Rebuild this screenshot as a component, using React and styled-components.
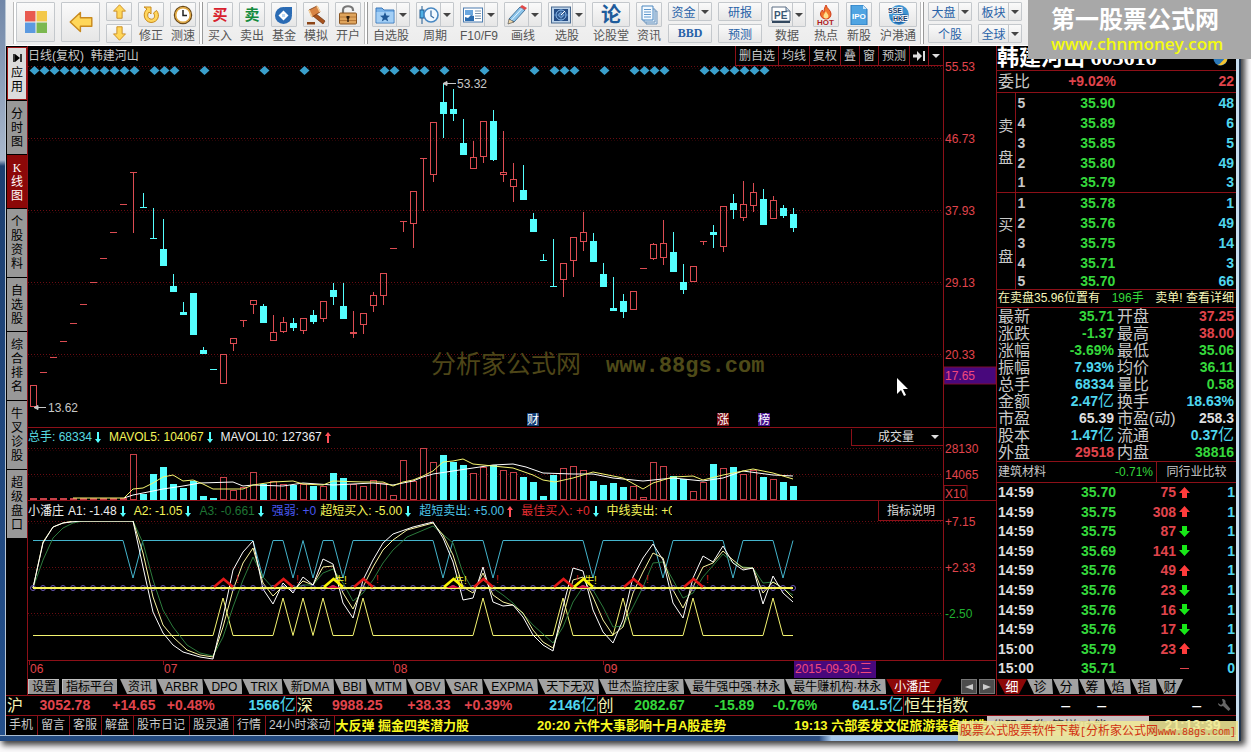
import React, { useState } from 'react';
import styled, { createGlobalStyle, css } from 'styled-components';

const SANS = `"Liberation Sans", "Noto Sans CJK SC", sans-serif`;
const RED = '#e0444c';
const LINE = '#8c1018';
const CYAN = '#54ffff';
const GREEN = '#35d83c';
const AQUA = '#4fd6ee';
const GREY = '#c8c8c8';

const GlobalStyle = createGlobalStyle`
  * { box-sizing: border-box; }
  body { margin: 0; background: #fbfafb; font-family: ${SANS}; font-size: 12px; }
  button, input, select { font: inherit; margin: 0; padding: 0; border: 0; background: none; color: inherit; }
  a { color: inherit; text-decoration: none; }
  table { border-collapse: collapse; border-spacing: 0; }
  td, th { padding: 0; font-weight: normal; }
  svg { display: block; }
`;

const Page = styled.div`
  position: relative;
  padding: 0 10px 11px 0;
  overflow: hidden;
`;

const Frame = styled.div`
  position: relative;
  padding: 0 5px 6px 6px;
  background:
    linear-gradient(to right, #c9dff0 3px, #23364c 3px) right / 5px 100% no-repeat,
    linear-gradient(#a9bdd2 1px, transparent 1px) bottom / 100% 6px no-repeat,
    linear-gradient(to right, #234a80 60%, #2b4c80 66%, #a7c8ec 67%, #8fb5e4 90%, #30507c) bottom / 100% 6px no-repeat,
    linear-gradient(to right, transparent 5px, #b8c6d4 5px) left / 6px 100% no-repeat,
    linear-gradient(#7187a8, #a9b8cc 160px, #1c3f70 166px, #24508c);
  box-shadow: 3px 3px 6px 1px rgba(0, 0, 0, 0.75);
`;

/* ---------- toolbar ---------- */

const Toolbar = styled.header`
  display: flex;
  height: 46px;
  padding: 2px 0 0 4px;
  overflow: hidden;
  background: linear-gradient(#f5f5f5, #ececec);
  border-bottom: 1px solid #fff;
`;

const Group = styled.div`
  display: flex;
  flex: none;
  gap: ${(p) => p.$gap || 6}px;
`;

const Divider = styled.i`
  flex: none;
  width: ${(p) => p.$width || 11}px;
  height: 42px;
  background: linear-gradient(to right, #bbb 1px, #fff 1px, #fff 3px, #999 3px, #999 4px, transparent 4px) 3px 0 no-repeat;
`;

const face = css`
  border: 1px solid #c4c8cc;
  border-radius: 1px;
  background: linear-gradient(#fafafa, #e6e6e6);
`;

const Tool = styled.button`
  display: flex;
  flex-direction: column;
  align-items: center;
  width: ${(p) => (p.$wide ? 38 : 26)}px;
  color: #555;
  white-space: nowrap;
  line-height: 18px;
`;

const ToolFace = styled.span`
  ${face}
  display: flex;
  align-items: center;
  justify-content: center;
  width: 100%;
  height: 26px;
  > svg:first-child { flex: none; margin: 0 auto; }
`;

const BigTool = styled.button`
  ${face}
  display: flex;
  align-items: center;
  justify-content: center;
  width: 39px;
  height: 40px;
`;

const Stack = styled.div`
  display: flex;
  flex-direction: column;
  gap: 3px;
`;

const SmallTool = styled.button`
  ${face}
  display: flex;
  align-items: center;
  justify-content: center;
  width: ${(p) => p.$width}px;
  height: 19px;
  color: #2862a8;
  font-weight: ${(p) => (p.$strong ? 'bold' : 'normal')};
  font-family: ${(p) => (p.$strong ? '"Liberation Serif", serif' : SANS)};
  > span { flex: 1; text-align: center; }
`;

const Character = styled.b`
  color: ${(p) => p.$color};
  font-size: ${(p) => p.$size}px;
  line-height: 22px;
`;

const CaretBox = styled.i`
  display: flex;
  align-items: center;
  justify-content: center;
  align-self: stretch;
  flex: none;
  width: 13px;
  border-left: 1px solid #c4c8cc;
`;

const Caret = ({ color = '#444', size = 8 }) => (
  <svg width={size} height="4" viewBox="0 0 8 4"><path d="M0 0h8L4 4z" fill={color} /></svg>
);

const DropCaret = () => <CaretBox><Caret /></CaretBox>;

const Icon = ({ size = 20, children }) => (
  <svg width={size} height={size} viewBox="0 0 20 20">{children}</svg>
);

const ARROW = 'M1 10 9.500 2v4.500H19v7H9.500V18z';

const Arrow = ({ size, turn }) => (
  <Icon size={size}>
    <path d={ARROW} transform={`rotate(${turn} 10 10)`} fill="#ffd75a" stroke="#c98a1e" strokeWidth="1.200" strokeLinejoin="round" />
  </Icon>
);

const icons = {
  redo: (
    <Icon>
      <path d="M6 4C1 8 3 17 10 17.500 17 17.500 19.500 10 15.500 5.500l-3 2.500c2 3 1 6-2 6.200C6 14 6 9 8 7l2 2V2H3z" fill="#ffd65c" stroke="#c88a1c" />
    </Icon>
  ),
  clock: (
    <Icon>
      <circle cx="10" cy="10" r="8.500" fill="#fff" stroke="#6b4a1a" strokeWidth="1.500" />
      <circle cx="10" cy="10" r="7.300" fill="none" stroke="#e0a63a" strokeWidth="1.500" />
      <path d="M10 5v5.500h4" fill="none" stroke="#222" strokeWidth="1.500" />
    </Icon>
  ),
  fund: (
    <Icon>
      <circle cx="9.500" cy="10.500" r="8.500" fill="#2a6bb4" />
      <path d="M10 2h8v8z" fill="#2a6bb4" />
      <path d="m9.500 5.500 2.500 2.500 2.500 2.500-2.500 2.500-2.500 2.500L7 13l-2.500-2.500L7 8z" fill="#fff" />
      <path d="M8 9h3v3H8z" fill="#bcd8f4" />
    </Icon>
  ),
  gavel: (
    <Icon>
      <path d="m9 8 10 8-2 3L7 11z" fill="#a8521c" stroke="#6c2f0c" strokeWidth=".7" />
      <path d="m3 5 8-4 3 6-8 5z" fill="#d88444" stroke="#7c3a12" strokeWidth=".8" />
      <path d="m3 5 3 7M11 1l3 6" stroke="#f6cf9a" strokeWidth="1.600" />
      <path d="M1 17h8v2.500H1z" fill="#8c4416" />
    </Icon>
  ),
  lock: (
    <Icon>
      <path d="M5 9V5c0-5 10-5 10 0v1" fill="none" stroke="#777" strokeWidth="2.200" />
      <rect x="1.500" y="8" width="17" height="11" rx="1" fill="#dfa45c" stroke="#8a5520" />
      <path d="M2 12h16M2 15.500h16" stroke="#b87a38" />
      <path d="M8.500 11h3v2l-.8 1v3H9.300v-3l-.8-1z" fill="#2c1a0a" />
    </Icon>
  ),
  folder: (
    <Icon>
      <path d="M1 3h6l2 2h10v13H1z" fill="#79b3ea" stroke="#3c78b8" />
      <path d="M1.500 7h17v10.500h-17z" fill="#a3cff6" />
      <path d="m10 7 1.400 3.500 3.600.2-2.800 2.300 1 3.500-3.200-2-3.200 2 1-3.500L5 10.700l3.600-.2z" fill="#1f5796" />
    </Icon>
  ),
  period: (
    <Icon>
      <path d="M3 1v18" stroke="#1f5b92" />
      <rect x="1" y="5" width="4" height="8" fill="#4fb0e4" stroke="#1f5b92" />
      <circle cx="12" cy="10" r="7" fill="#f2f9ff" stroke="#4988c2" strokeWidth="1.600" />
      <path d="M12 5.500V11l3 2" fill="none" stroke="#3c6fa4" strokeWidth="1.300" />
    </Icon>
  ),
  paper: (
    <Icon>
      <rect x=".5" y="3" width="19" height="14" fill="#fff" stroke="#4d7db0" />
      <path d="M2 5h8v5H2z" fill="#6aa6de" />
      <path d="m2 12 3 1 3-3 3 1v5H2z" fill="#2a6cb0" />
      <path d="M12 6h6M12 8.500h6M12 11h6M12 13.500h6" stroke="#7c93ac" />
    </Icon>
  ),
  pencil: (
    <Icon>
      <path d="m2 14 11-12 5 3L7 17z" fill="#8cc4ea" stroke="#46759c" />
      <path d="m13 2 2-2 5 3-2 2z" fill="#e04848" />
      <path d="m2 14 5 3-6 2z" fill="#f0d8a8" stroke="#444" strokeWidth=".6" />
      <path d="m4 15.500 11-12" stroke="#e4f5ff" />
    </Icon>
  ),
  radar: (
    <Icon>
      <rect x=".5" y="2" width="19" height="16" fill="#bcd3ea" stroke="#4a6a90" />
      <rect x="3" y="4" width="14" height="12" fill="#254d86" />
      <circle cx="10" cy="10" r="5" fill="none" stroke="#8fc0ee" />
      <circle cx="10" cy="10" r="2.300" fill="none" stroke="#8fc0ee" />
      <path d="M10 4v12M3 10h14" stroke="#5f92cc" strokeWidth=".7" />
      <path d="m10 10 4-4" stroke="#fff" />
    </Icon>
  ),
  pages: (
    <Icon>
      <path d="M7 6h11v13H7z" fill="#d8e8f6" stroke="#6c94bc" />
      <path d="M5 4h11v13H5z" fill="#e4f0fa" stroke="#6c94bc" />
      <path d="M3 1h11v14H3z" fill="#f4faff" stroke="#4b86bf" />
      <path d="M5 4.500h7M5 7h7M5 9.500h7M5 12h7" stroke="#5f97cc" />
    </Icon>
  ),
  pe: (
    <Icon>
      <path d="M1 2h14l4 4v10H1z" fill="#fff" stroke="#5c6f84" />
      <path d="M15 2v4h4" fill="#c8d8e8" stroke="#5c6f84" />
      <path d="M1 16h18v2H1z" fill="#33485f" />
      <text x="3" y="14" fontSize="10" fontWeight="bold" fill="#3b5876">PE</text>
    </Icon>
  ),
  hot: (
    <Icon>
      <path d="M10 0c1 4 5 5 5 9 0 3-2 5-5 5s-5.500-2-5.500-5c0-2 1-3 2-4 0 2 1 2 1.500 2C8 4 9 2 10 0z" fill="#f2762c" stroke="#d03c1c" />
      <path d="M10 6c0 2 2.500 3 2.500 5S11 13.500 10 13.500 7.500 13 7.500 11 9.500 8 10 6z" fill="#ffe08c" />
      <text x="1" y="20" fontSize="8" fontWeight="bold" fill="#b01c24">HOT</text>
    </Icon>
  ),
  ipo: (
    <Icon>
      <path d="M2 0h12l4 4v16H2z" fill="#4fa4e2" stroke="#2a78bc" />
      <path d="M14 0v4h4z" fill="#cbe6fa" />
      <text x="3" y="14" fontSize="8" fontWeight="bold" fill="#fff">IPO</text>
    </Icon>
  ),
};

const SseIcon = () => (
  <svg width="26" height="22" viewBox="0 0 26 22">
    <circle cx="14" cy="11" r="10" fill="#3f94d2" />
    <path d="M6 15c5-5 12-6 17-4-1 9-12 12-17 4z" fill="#1d5fa2" />
    <text x="3" y="9" fontSize="7" fontWeight="bold" fill="#123a6c" stroke="#fff" strokeWidth="1.500" paintOrder="stroke">SSE</text>
    <text x="8" y="17" fontSize="7" fontWeight="bold" fill="#123a6c" stroke="#fff" strokeWidth="1.500" paintOrder="stroke">HKE</text>
  </svg>
);

const ToolItem = ({ icon, label, wide, drop }) => (
  <Tool type="button" $wide={wide}>
    <ToolFace>{icon}{drop && <DropCaret />}</ToolFace>
    {label}
  </Tool>
);

const PairTool = ({ items, width = 44 }) => (
  <Stack>
    {items.map((t) => (
      <SmallTool key={t.label} type="button" $width={width} $strong={t.strong}>
        <span>{t.label}</span>{t.drop && <DropCaret />}
      </SmallTool>
    ))}
  </Stack>
);

const TopBar = () => (
  <Toolbar>
    <Divider $width={6} />
    <Group>
      <BigTool type="button" aria-label="首页">
        <Icon size={22}>
          <path d="M0 0h9.500v9.500H0z" fill="#e85a50" /><path d="M10.500 0H20v9.500h-9.500z" fill="#f3c84a" />
          <path d="M0 10.500h9.500V20H0z" fill="#5c9ae0" /><path d="M10.500 10.500H20V20h-9.500z" fill="#7cb850" />
        </Icon>
      </BigTool>
      <BigTool type="button" aria-label="后退"><Arrow size={24} turn={0} /></BigTool>
      <Stack>
        <SmallTool type="button" $width={26} aria-label="上一个"><Arrow size={15} turn={90} /></SmallTool>
        <SmallTool type="button" $width={26} aria-label="下一个"><Arrow size={15} turn={-90} /></SmallTool>
      </Stack>
      <ToolItem icon={icons.redo} label="修正" />
      <ToolItem icon={icons.clock} label="测速" />
    </Group>
    <Divider />
    <Group>
      <ToolItem icon={<Character $color="#d8202c" $size={15}>买</Character>} label="买入" />
      <ToolItem icon={<Character $color="#128a3c" $size={15}>卖</Character>} label="卖出" />
      <ToolItem icon={icons.fund} label="基金" />
      <ToolItem icon={icons.gavel} label="模拟" />
      <ToolItem icon={icons.lock} label="开户" />
    </Group>
    <Divider />
    <Group>
      <ToolItem icon={icons.folder} label="自选股" wide drop />
      <ToolItem icon={icons.period} label="周期" wide drop />
      <ToolItem icon={icons.paper} label="F10/F9" wide drop />
      <ToolItem icon={icons.pencil} label="画线" wide drop />
      <ToolItem icon={icons.radar} label="选股" wide drop />
      <ToolItem icon={<Character $color="#1f5c9c" $size={20}>论</Character>} label="论股堂" wide />
      <ToolItem icon={icons.pages} label="资讯" />
      <PairTool items={[{ label: '资金', drop: true }, { label: 'BBD', strong: true }]} />
      <PairTool items={[{ label: '研报' }, { label: '预测' }]} />
      <Group $gap={7}>
        <ToolItem icon={icons.pe} label="数据" wide drop />
        <ToolItem icon={icons.hot} label="热点" />
        <ToolItem icon={icons.ipo} label="新股" />
        <ToolItem icon={<SseIcon />} label="沪港通" wide />
      </Group>
    </Group>
    <Divider />
    <Group>
      <PairTool items={[{ label: '大盘', drop: true }, { label: '个股' }]} />
      <PairTool items={[{ label: '板块', drop: true }, { label: '全球', drop: true }]} />
    </Group>
  </Toolbar>
);

/* ---------- side tabs ---------- */

const Body = styled.div`
  display: grid;
  grid-template-columns: 21px minmax(0, 1fr) 240px;
  background: #000;
  color: ${GREY};
`;

const Side = styled.nav`
  display: flex;
  flex-direction: column;
  gap: 1px;
  padding: 1px 0 0 1px;
`;

const SideTab = styled.button`
  display: flex;
  flex-direction: column;
  align-items: center;
  justify-content: center;
  gap: 4px;
  height: ${(p) => p.$chars * 15 + 8}px;
  background: ${(p) => (p.$active ? '#8c0808' : p.$light ? '#dcdcdc' : '#989898')};
  color: ${(p) => (p.$active ? '#fff' : '#000')};
  outline: ${(p) => (p.$light ? '1px solid #a01818' : 'none')};
  outline-offset: -1px;
  span { width: 12px; line-height: 14px; word-break: break-all; text-align: center; }
  span::first-letter { font-family: "Liberation Serif", "Noto Sans CJK SC", serif; }
`;

const sideTabs = ['应用', '分时图', 'K线图', '个股资料', '自选股', '综合排名', '牛叉诊股', '超级盘口'];

const SideTabs = () => {
  const [active, setActive] = useState('K线图');
  return (
    <Side>
      {sideTabs.map((t, i) => (
        <SideTab key={t} type="button" $chars={i === 0 ? 3 : t.length} $light={i === 0} $active={t === active} onClick={() => setActive(t)}>
          {i === 0 && <svg width="9" height="8" viewBox="0 0 9 8"><path d="M1 0v8M8 0v8" stroke="#000" strokeWidth="1.500" /><path d="m2 0 5 4-5 4z" /></svg>}
          <span>{t}</span>
        </SideTab>
      ))}
    </Side>
  );
};

/* ---------- charts ---------- */

const Main = styled.main`
  border-left: 1px solid ${LINE};
`;

const Pane = styled.section`
  display: grid;
  grid-template-columns: minmax(0, 1fr) 53px;
  border-bottom: 1px solid ${LINE};
`;

const PaneHead = styled.div`
  display: flex;
  justify-content: space-between;
  height: ${(p) => p.$height}px;
  line-height: ${(p) => p.$height}px;
  white-space: nowrap;
`;

const Axis = styled.div`
  border-left: 1px solid ${LINE};
`;

const HeadButtons = styled.div`
  display: flex;
  border: 1px solid ${LINE};
  border-top: 0;
  border-right: 0;
  button {
    display: flex;
    align-items: center;
    padding: 0 3px;
    line-height: 18px;
    border-right: 1px solid ${LINE};
  }
  button:last-child { border-right: 0; padding: 0 3px; }
`;

const Legend = styled.div`
  display: flex;
  width: ${(p) => p.$width || 'auto'};
  overflow: hidden;
`;

const LegendItem = styled.span`
  display: flex;
  flex: none;
  align-items: center;
  gap: 3px;
  padding-right: ${(p) => p.$space || 8}px;
  color: ${(p) => p.$color};
`;

const PaneSelect = styled.label`
  display: flex;
  align-items: center;
  width: 92px;
  padding: 0 4px 0 26px;
  border: 1px solid ${LINE};
  border-width: 0 0 1px 1px;
  margin-top: 1px;
  select { flex: 1; appearance: none; color: #ddd; line-height: 16px; }
`;

const PaneButton = styled.button`
  padding: 0 8px;
  border: 1px solid ${LINE};
  border-width: 0 0 1px 1px;
  line-height: 18px;
  color: #ddd;
`;

const Plot = styled.svg`
  width: 100%;
  height: ${(p) => p.$height}px;
  overflow: hidden;
`;

const TickArrow = ({ up }) => (
  <svg width="6" height="11" viewBox="0 0 6 11">
    <path d={up ? 'M3 0 6 4H4v7H2V4H0z' : 'M3 11 6 7H4V0H2v7H0z'} fill={up ? '#ff5058' : CYAN} />
  </svg>
);

const X0 = 33;
const STEP = 10;

// high, body top, body bottom, low, rising
const candles = [
  [385, 385, 406, 406, 1], [372, 372, 372, 372, 1], [357, 357, 357, 357, 1], [341, 341, 341, 341, 1],
  [323, 323, 323, 323, 1], [304, 304, 304, 304, 1], [282, 282, 282, 282, 1], [258, 258, 258, 258, 1],
  [232, 232, 232, 232, 1], [204, 204, 204, 204, 1], [172, 172, 172, 233, 1], [193, 207, 207, 207, 0],
  [208, 238, 238, 238, 0], [219, 249, 265, 265, 0], [274, 286, 291, 291, 0], [302, 312, 314, 314, 0],
  [293, 293, 334, 334, 0], [347, 350, 353, 353, 0], [369, 369, 369, 369, 0], [354, 354, 383, 383, 1],
  [338, 338, 343, 351, 1], [320, 320, 320, 327, 1], [300, 300, 304, 314, 1], [304, 306, 322, 322, 0],
  [315, 332, 340, 340, 1], [317, 322, 331, 333, 1], [318, 323, 327, 331, 0], [318, 318, 330, 334, 1],
  [310, 315, 321, 324, 0], [301, 301, 318, 322, 1], [283, 290, 296, 305, 0], [283, 306, 318, 318, 0],
  [311, 332, 333, 338, 1], [313, 313, 324, 334, 1], [292, 295, 305, 312, 1], [273, 273, 295, 305, 1],
  [248, 248, 248, 248, 1], [221, 221, 221, 232, 1], [191, 191, 223, 248, 1], [158, 158, 158, 211, 1],
  [122, 122, 174, 182, 1], [83, 102, 113, 138, 0], [89, 109, 113, 121, 0], [119, 143, 154, 154, 0],
  [141, 157, 168, 168, 1], [121, 121, 156, 163, 1], [110, 121, 159, 161, 0], [131, 172, 174, 182, 1],
  [163, 179, 186, 202, 1], [165, 190, 199, 200, 0], [213, 219, 231, 231, 0], [254, 260, 260, 260, 0],
  [239, 286, 286, 286, 0], [263, 263, 279, 297, 1], [237, 237, 260, 277, 1], [212, 232, 241, 251, 1],
  [233, 241, 261, 261, 0], [263, 274, 286, 286, 0], [277, 308, 310, 310, 0], [294, 301, 311, 318, 0],
  [291, 291, 309, 310, 1], [268, 268, 268, 268, 1], [243, 244, 258, 260, 1], [220, 243, 257, 265, 1],
  [232, 252, 271, 271, 0], [264, 282, 289, 294, 0], [266, 266, 281, 281, 1], [241, 241, 241, 245, 1],
  [225, 232, 234, 248, 0], [206, 206, 246, 252, 1], [194, 203, 209, 219, 0], [181, 204, 217, 221, 1],
  [183, 192, 205, 212, 1], [189, 199, 224, 224, 0], [196, 200, 218, 218, 1], [205, 208, 215, 218, 0],
  [208, 214, 227, 232, 0],
];

const volumes = [
  498, 498, 498, 498, 498, 498, 498, 498, 498, 498, 454, 494, 474, 467, 484, 488, 481, 496, 498, 477,
  490, 487, 472, 484, 481, 484, 485, 484, 486, 486, 473, 478, 484, 486, 480, 483, 495, 460, 481, 448,
  462, 455, 462, 465, 473, 467, 465, 470, 472, 477, 482, 496, 475, 468, 466, 470, 481, 485, 483, 487,
  486, 497, 462, 466, 476, 479, 491, 482, 464, 468, 467, 474, 470, 477, 479, 482, 486,
];

const ma5 = '73,498 124,498 133,489 143,488 153,483 163,477 173,475 183,481 193,480 203,484 213,489 243,489 253,485 273,482 293,481 303,484 323,485 333,481 363,482 383,482 393,486 403,482 413,480 423,476 433,471 443,462 453,461 463,459 473,464 493,466 513,468 533,475 543,480 555,482 573,478 593,472 613,476 623,478 643,489 653,483 673,477 693,476 703,480 723,475 743,471 753,469 773,473 793,479';
const ma10 = '124,498 133,495 143,493 163,489 183,486 200,483 233,482 243,486 253,485 283,486 303,483 333,485 373,483 393,485 413,481 423,477 433,474 453,471 473,468 493,465 513,464 526,467 543,473 573,474 593,474 613,478 643,481 673,478 703,481 723,478 743,471 773,475 793,476';

const a1 = '33,588 43,543 53,527 63,523 80,521 133,521 143,567 153,612 163,633 173,645 183,652 200,657 213,659 223,617 233,570 243,552 253,541 263,589 273,604 283,583 293,593 303,577 313,585 323,559 333,564 343,603 353,618 363,580 373,560 383,543 393,534 413,527 433,522 443,538 453,562 463,600 473,598 483,567 493,602 503,606 513,605 523,617 533,635 543,645 553,651 563,607 573,568 583,571 593,610 603,632 613,643 623,620 633,577 643,558 653,544 663,560 673,603 683,618 693,578 703,556 713,562 723,546 733,563 743,570 753,568 763,604 773,576 783,593 793,602';
const a2 = '33,588 43,542 53,527 63,523 73,521 133,521 143,553 153,597 163,625 173,637 187,650 200,655 213,657 223,627 233,590 243,563 253,548 263,583 273,596 283,586 293,591 303,581 313,585 323,567 333,566 343,593 353,609 363,587 373,567 383,550 393,540 407,530 433,523 443,535 453,555 463,587 473,593 483,573 493,595 503,602 513,605 523,613 533,630 543,642 553,648 563,617 573,580 583,577 593,597 603,620 613,635 623,627 633,593 643,572 653,553 663,558 673,590 683,608 693,587 703,567 713,563 723,551 733,560 743,568 753,568 763,593 773,582 783,588 793,598';
const a3 = '33,588 43,560 53,538 63,528 73,523 83,521 133,521 143,543 153,580 163,610 173,627 187,645 200,653 213,656 223,637 233,607 243,580 253,557 263,577 273,588 293,588 303,585 313,585 323,573 333,569 343,583 353,601 363,593 373,580 383,563 393,550 407,537 433,526 453,543 463,573 473,590 483,580 493,588 503,595 513,603 533,625 553,643 563,627 573,602 583,587 593,590 603,607 613,627 623,626 633,607 643,587 653,563 663,562 673,580 683,598 693,593 703,577 723,554 733,563 743,567 753,568 763,583 773,582 793,595';

const spikes = (centers, flat, tip) =>
  [`33,${flat}`, ...centers.map((x) => `${x - 10},${flat} ${x},${tip} ${x + 10},${flat}`)].join(' ');

const sellLine = spikes([133, 263, 293, 313, 343, 443, 493, 593, 663, 733, 783], 540.5, 578);
const buyLine = `${spikes([223, 283, 303, 323, 363, 483, 563, 623, 693, 773], 635.5, 598)} 793,635.5`;
const buySignals = [223, 283, 363, 483, 563, 633, 693];
const bullSignals = [333, 453, 583];

const diamonds = [0, 1, 2, 3, 4, 5, 6, 7, 8, 9, 10, 12, 13, 14, 17, 23, 27, 35, 36, 38, 39, 41, 45, 50, 52, 53, 54, 57, 60, 61, 62, 63, 67, 68, 69, 70, 71, 72, 73];

const Grid = ({ rows }) => rows.map((y) => (
  <g key={y} stroke="#6a0c12" strokeDasharray="1 2">
    <line x1="0" x2="100%" y1={y + 0.5} y2={y + 0.5} />
    <line x1="1" x2="100%" y1={y + 2.5} y2={y + 2.5} strokeOpacity=".4" />
  </g>
));

const Candle = ({ x, data }) => {
  const [high, top, bottom, low, up] = data;
  const color = up ? '#dc4c52' : CYAN;
  const flat = bottom - top < 1;
  return (
    <g stroke={color} fill="none" shapeRendering="crispEdges">
      {high < top && <path d={`M${x + 0.5} ${high}V${top}`} />}
      {low > bottom && <path d={`M${x + 0.5} ${bottom}V${low}`} />}
      {flat && !up && high < top && <path d={`M${x + 0.5} ${high}V${top}`} />}
      {flat
        ? <path d={`M${x - 3} ${top + 0.5}h7`} />
        : <rect x={x - 2.5} y={top + 0.5} width="6" height={bottom - top} fill={up ? 'none' : CYAN} />}
    </g>
  );
};

const Mark = ({ x, color, children }) => (
  <g>
    <rect x={x - 6} y="413" width="12" height="13" fill={color} />
    <text x={x - 6} y="424" fill="#fff">{children}</text>
  </g>
);

const PricePane = () => (
  <Pane>
    <div>
      <PaneHead $height={20}>
        <span>日线(复权)&nbsp; 韩建河山</span>
        <HeadButtons>
          {['删自选', '均线', '复权', '叠', '窗', '预测'].map((t) => <button key={t} type="button">{t}</button>)}
          <button type="button" aria-label="展开">
            <svg width="12" height="10" viewBox="0 0 12 10"><path d="M0 3.500h4V0l5 5-5 5V6.500H0zM10 0h2v10h-2z" fill="#ddd" /></svg>
          </button>
          <button type="button" aria-label="更多"><Caret color="#ddd" /></button>
        </HeadButtons>
      </PaneHead>
      <Plot $height={361} fontSize="12">
        <Grid rows={[0, 72, 144, 216, 288]} />
        <g transform="translate(-28 -66)">
          {diamonds.map((k) => <path key={k} d={`M${34.5 + k * STEP} 66l5 4.500-5 4.500-5-4.500z`} fill="#3aa0cc" />)}
          <text x="431" y="373" fontSize="25" fill="#4e4618">分析家公式网</text>
          <text x="606" y="372" fontSize="22" fontFamily="Liberation Mono" fontWeight="bold" fill="#4e4a18">www.88gs.com</text>
          {candles.map((c, i) => <Candle key={i} x={X0 + i * STEP} data={c} />)}
          <g fill={GREY} stroke={GREY}>
            <path d="M443 83.500h13M443 83.500l4-2v4zM34 407.500h12M34 407.500l4-2v4z" />
            <text x="457" y="88" stroke="none">53.32</text>
            <text x="48" y="412" stroke="none">13.62</text>
          </g>
          <Mark x={533} color="#123c74">财</Mark>
          <Mark x={723} color="#7c0c10">涨</Mark>
          <Mark x={764} color="#43108c">榜</Mark>
          <path d="M897 378v16l4-4 3 6 2-1-3-6h5z" fill="#fff" />
        </g>
      </Plot>
    </div>
    <Axis>
      <Plot $height={381} fontSize="12" fill={RED}>
        {['55.53', '46.73', '37.93', '29.13', '20.33'].map((t, i) => <text key={t} x="1" y={25 + i * 72}>{t}</text>)}
        <rect x="0" y="321" width="52" height="17" fill="#48087c" stroke="#7c0c30" />
        <text x="1" y="334" fill="#f0487c">17.65</text>
      </Plot>
    </Axis>
  </Pane>
);

const VolumePane = () => (
  <Pane>
    <div>
      <PaneHead $height={18}>
        <Legend>
          <LegendItem $color="#58dce0">总手: 68334<TickArrow /></LegendItem>
          <LegendItem $color="#f4f458">MAVOL5: 104067<TickArrow /></LegendItem>
          <LegendItem $color="#eee">MAVOL10: 127367<TickArrow up /></LegendItem>
        </Legend>
        <PaneSelect>
          <select aria-label="副图指标"><option>成交量</option></select>
          <Caret color="#ddd" />
        </PaneSelect>
      </PaneHead>
      <Plot $height={54}>
        <Grid rows={[2, 28]} />
        <g transform="translate(-28 -446)" fill="none">
          {volumes.map((y, i) => {
            const up = candles[i][4];
            return (
              <rect
                key={i}
                x={X0 + i * STEP - 2.5}
                y={y + 0.5}
                width="6"
                height={499 - y}
                stroke={up ? '#c84048' : CYAN}
                fill={up ? '#000' : CYAN}
                shapeRendering="crispEdges"
              />
            );
          })}
          <polyline points={ma10} stroke="#fff" />
          <polyline points={ma5} stroke="#f4f470" />
        </g>
      </Plot>
    </div>
    <Axis>
      <Plot $height={72} fontSize="12" fill={RED}>
        <text x="1" y="25">28130</text>
        <text x="1" y="51">14065</text>
        <rect x="0" y="57.500" width="23" height="16" fill="none" stroke={LINE} />
        <text x="1" y="70">X10</text>
      </Plot>
    </Axis>
  </Pane>
);

const IndicatorPane = () => (
  <Pane>
    <div>
      <PaneHead $height={20}>
        <Legend $width="644px">
          <LegendItem $color="#eee" $space={4}>小潘庄</LegendItem>
          <LegendItem $color="#eee">A1: -1.48<TickArrow /></LegendItem>
          <LegendItem $color="#f4f458">A2: -1.05<TickArrow /></LegendItem>
          <LegendItem $color="#1f7434">A3: -0.661<TickArrow /></LegendItem>
          <LegendItem $color="#4858f0" $space={4}>强弱: +0</LegendItem>
          <LegendItem $color="#f4f458">超短买入: -5.00<TickArrow /></LegendItem>
          <LegendItem $color="#4cc4e8">超短卖出: +5.00<TickArrow up /></LegendItem>
          <LegendItem $color="#e02c30">最佳买入: +0<TickArrow /></LegendItem>
          <LegendItem $color="#f4f458">中线卖出: +0</LegendItem>
        </Legend>
        <PaneButton type="button">指标说明</PaneButton>
      </PaneHead>
      <Plot $height={139}>
        <Grid rows={[0, 46, 92]} />
        <g transform="translate(-28 -521)" fill="none">
          <polyline points={sellLine} stroke="#44b4cc" />
          <polyline points={buyLine} stroke="#f4f470" />
          <polyline points={a3} stroke="#2c7a3c" />
          <polyline points={a2} stroke="#f8f4a0" />
          <polyline points={a1} stroke="#fff" />
          {candles.map((c, i) => <circle key={i} cx={X0 + i * STEP} cy="588" r="2.500" stroke="#6c58b8" />)}
          <path d="M33 588h760" stroke="#f8f458" strokeWidth="2" />
          {buySignals.map((x) => (
            <g key={x}>
              <path d={`M${x - 9} 587l9.500-8 9.500 8`} stroke="#e01818" strokeWidth="2.500" />
              <text x={x + 13} y="583" fontSize="10" fill="#d01818">!</text>
            </g>
          ))}
          {bullSignals.map((x) => (
            <g key={x}>
              <path d={`M${x - 7} 588l7-3 7 3z`} fill="#e01848" />
              <path d={`M${x - 9} 587l9.500-8 9.500 8`} stroke="#f8f400" strokeWidth="2.500" />
              <text x={x + 1} y="584" fontSize="10" fill="#f0f020">牛!</text>
            </g>
          ))}
        </g>
      </Plot>
    </div>
    <Axis>
      <Plot $height={159} fontSize="12" fill={RED}>
        <text x="1" y="25">+7.15</text>
        <text x="1" y="71">+2.33</text>
        <text x="1" y="117" fill="#20b030">-2.50</text>
      </Plot>
    </Axis>
  </Pane>
);

const TimeAxis = () => (
  <Plot $height={17} fontSize="12" fill={RED}>
    <path d="M1.500 0v4M135.500 0v4M365.500 0v4M575.500 0v4" stroke={LINE} />
    <text x="2" y="12">06</text>
    <text x="136" y="12">07</text>
    <text x="366" y="12">08</text>
    <text x="576" y="12">09</text>
    <rect x="766" width="82" height="17" fill="#48087c" />
    <text x="767" y="12" fill="#f0487c">2015-09-30,三</text>
  </Plot>
);

/* ---------- indicator tabs ---------- */

const TabBar = styled.nav`
  display: flex;
  height: 17px;
  padding: 1px 1px 0 0;
  overflow: hidden;
  color: #000;
  line-height: 15px;
  white-space: nowrap;
`;

const FlatTab = styled.button`
  height: 15px;
  padding: 0 3px;
  margin-right: 3px;
  background: #989898;
  border: 1px solid #c0c0c0;
  border-width: 1px 0 0 1px;
  line-height: 14px;
`;

const SlantTab = styled.button`
  height: 15px;
  padding: 1px 5px 0 8px;
  background: ${(p) => (p.$active ? '#8c0808' : '#a2a2a2')};
  color: ${(p) => (p.$active ? '#fff' : '#000')};
  clip-path: ${(p) => (p.$active
    ? 'polygon(0 0, 100% 0, calc(100% - 8px) 100%, 8px 100%)'
    : 'polygon(0 0, calc(100% - 1px) 0, 100% 100%, 7px 100%)')};
  ${(p) => p.$active && 'padding-right: 12px;'}
`;

const QuoteTab = styled(SlantTab)`
  width: 26px;
  padding: 0 4px;
  font-size: 13px;
  text-align: center;
  ${(p) => p.$active && 'width: 30px;'}
  &:last-child { clip-path: polygon(0 0, 100% 0, calc(100% - 7px) 100%, 7px 100%); }
`;

const Pager = styled.div`
  display: flex;
  gap: 2px;
  margin-left: auto;
  button {
    display: flex;
    align-items: center;
    justify-content: center;
    width: 16px;
    height: 15px;
    background: #4c4c4c;
    border: 1px solid #777;
  }
`;

const indicatorTabs = ['资讯', 'ARBR', 'DPO', 'TRIX', '新DMA', 'BBI', 'MTM', 'OBV', 'SAR', 'EXPMA', '天下无双', '世杰监控庄家', '最牛强中强·林永', '最牛赚机构·林永', '小潘庄'];

const IndicatorTabs = () => {
  const [active, setActive] = useState('小潘庄');
  return (
    <TabBar>
      <FlatTab type="button">设置</FlatTab>
      <FlatTab type="button">指标平台</FlatTab>
      {indicatorTabs.map((t) => (
        <SlantTab key={t} type="button" $active={t === active} onClick={() => setActive(t)}>{t}</SlantTab>
      ))}
      <Pager>
        <button type="button" aria-label="左移"><svg width="8" height="6" viewBox="0 0 8 6"><path d="M8 0v6L0 3z" fill="#ccc" /></svg></button>
        <button type="button" aria-label="右移"><svg width="8" height="6" viewBox="0 0 8 6"><path d="M0 0v6l8-3z" fill="#ccc" /></svg></button>
      </Pager>
    </TabBar>
  );
};

/* ---------- quote panel ---------- */

const Quote = styled.aside`
  display: flex;
  flex-direction: column;
  border-left: 1px solid ${LINE};
`;

const StockTitle = styled.h1`
  display: flex;
  justify-content: space-between;
  align-items: center;
  height: 25px;
  margin: 0;
  padding-right: 8px;
  border-bottom: 1px solid ${LINE};
  color: #fff;
  font: bold 22px/24px "Liberation Serif", "Noto Sans CJK SC", serif;
  white-space: nowrap;
`;

const Ratio = styled.div`
  display: grid;
  grid-template-columns: 40px 78px 1fr;
  height: 22px;
  padding: 0 2px 0 1px;
  border-bottom: 1px solid ${LINE};
  font-size: 16px;
  line-height: 21px;
  b { color: ${RED}; font-size: 14px; text-align: right; }
`;

const Book = styled.table`
  width: 100%;
  border-bottom: 1px solid ${LINE};
  font-size: 14px;
  line-height: 16px;
  th {
    width: 18px;
    border-right: 1px solid ${LINE};
    font-size: 15px;
    line-height: 32px;
  }
  td { height: 20px; text-align: right; font-weight: bold; }
  tr:last-child td { height: ${(p) => p.$last}px; }
  td:nth-last-child(3) { width: 9px; padding-left: 2px; text-align: left; }
  td:nth-last-child(2) { width: 90px; color: ${GREEN}; }
  td:nth-last-child(1) { padding-right: 2px; color: ${AQUA}; }
`;

const BookSide = ({ title, rows, last }) => (
  <Book $last={last}>
    <tbody>
      {rows.map((r, i) => (
        <tr key={r[0]}>
          {i === 0 && <th rowSpan="5" scope="rowgroup">{title[0]}<br />{title[1]}</th>}
          <td>{r[0]}</td><td>{r[1]}</td><td>{r[2]}</td>
        </tr>
      ))}
    </tbody>
  </Book>
);

const Tip = styled.a`
  display: flex;
  justify-content: space-between;
  height: 18px;
  padding: 0 2px 0 1px;
  border-bottom: 1px solid ${LINE};
  color: #f8f8b8;
  line-height: 17px;
  white-space: nowrap;
  i { color: ${GREEN}; font-style: normal; }
`;

const Stats = styled.table`
  width: 100%;
  height: 154px;
  border-bottom: 1px solid ${LINE};
  table-layout: fixed;
  th { height: 17px; padding-left: 1px; font-size: 16px; line-height: 17px; text-align: left; white-space: nowrap; }
  td { height: 17px; padding-right: 2px; font-size: 14px; line-height: 16px; text-align: right; white-space: nowrap; }
`;

const tones = { r: RED, g: GREEN, c: AQUA, w: '#ddd' };

const Figure = styled.b`
  color: ${(p) => tones[p.$tone]};
  font-size: 14px;
  i { font-size: 16px; font-style: normal; font-weight: normal; line-height: 0; }
`;

const Value = ({ text, tone }) => (
  <Figure $tone={tone}>{text.replace('亿', '')}{text.includes('亿') && <i>亿</i>}</Figure>
);

const Industry = styled.div`
  display: grid;
  grid-template-columns: 50px 1fr 80px;
  height: 21px;
  padding-left: 1px;
  border-bottom: 1px solid ${LINE};
  line-height: 20px;
  white-space: nowrap;
  span { padding-right: 3px; color: ${GREEN}; text-align: right; }
  button { border-left: 1px solid ${LINE}; }
`;

const Trades = styled.table`
  flex: 1;
  width: 100%;
  height: 193px;
  table-layout: fixed;
  font-size: 14px;
  td { height: 19px; line-height: 18px; font-weight: bold; text-align: right; }
  td:nth-child(1) { width: 48px; padding-left: 1px; color: #ddd; text-align: left; }
  td:nth-child(2) { width: 71px; color: ${GREEN}; }
  td:nth-child(3) { width: 60px; color: ${RED}; }
  td:nth-child(4) { width: 18px; padding-left: 3px; }
  td:nth-child(5) { padding-right: 1px; color: ${AQUA}; }
`;

const TradeSize = styled.td`
  && { color: ${(p) => (p.$up ? RED : GREEN)}; }
`;

const sells = [['5', '35.90', '48'], ['4', '35.89', '6'], ['3', '35.85', '5'], ['2', '35.80', '49'], ['1', '35.79', '3']];
const buys = [['1', '35.78', '1'], ['2', '35.76', '49'], ['3', '35.75', '14'], ['4', '35.71', '3'], ['5', '35.70', '66']];

const stats = [
  ['最新', '35.71', 'g', '开盘', '37.25', 'r'],
  ['涨跌', '-1.37', 'g', '最高', '38.00', 'r'],
  ['涨幅', '-3.69%', 'g', '最低', '35.06', 'g'],
  ['振幅', '7.93%', 'c', '均价', '36.11', 'g'],
  ['总手', '68334', 'c', '量比', '0.58', 'g'],
  ['金额', '2.47亿', 'c', '换手', '18.63%', 'c'],
  ['市盈', '65.39', 'w', '市盈(动)', '258.3', 'w'],
  ['股本', '1.47亿', 'c', '流通', '0.37亿', 'c'],
  ['外盘', '29518', 'r', '内盘', '38816', 'g'],
];

const trades = [
  ['14:59', '35.70', 75, 1, 1], ['14:59', '35.75', 308, 1, 1], ['14:59', '35.75', 87, 0, 1], ['14:59', '35.69', 141, 0, 1],
  ['14:59', '35.76', 49, 1, 1], ['14:59', '35.76', 23, 0, 1], ['14:59', '35.76', 16, 0, 1], ['14:59', '35.76', 17, 0, 1],
  ['15:00', '35.79', 23, 1, 1], ['15:00', '35.71', null, 1, 0],
];

const QuotePanel = () => {
  const [tab, setTab] = useState('细');
  return (
    <Quote>
      <StockTitle>
        韩建河山 603616
        <svg width="15" height="15" viewBox="0 0 15 15">
          <circle cx="7.500" cy="7.500" r="7" fill="#2c78b8" />
          <path d="M14.500 6c0 8-7 9-10 8 5-2 5-6 10-8z" fill="#f4c430" />
        </svg>
      </StockTitle>
      <Ratio><span>委比</span><b>+9.02%</b><b>22</b></Ratio>
      <BookSide title="卖盘" rows={sells} last={19} />
      <BookSide title="买盘" rows={buys} last={16} />
      <Tip href="#detail"><span>在卖盘35.96位置有</span><i>196手</i><span>卖单! 查看详细</span></Tip>
      <Stats>
        <colgroup><col width="50" /><col width="69" /><col width="60" /><col /></colgroup>
        <tbody>
          {stats.map((s) => (
            <tr key={s[0]}>
              <th scope="row">{s[0]}</th>
              <td><Value text={s[1]} tone={s[2]} /></td>
              <th scope="row">{s[3]}</th>
              <td><Value text={s[4]} tone={s[5]} /></td>
            </tr>
          ))}
        </tbody>
      </Stats>
      <Industry>建筑材料<span>-0.71%</span><button type="button">同行业比较</button></Industry>
      <Trades>
        <tbody>
          {trades.map((t, i) => (
            <tr key={i}>
              <td>{t[0]}</td>
              <td>{t[1]}</td>
              <TradeSize $up={t[3]}>{t[2]}</TradeSize>
              <td>
                {t[2] === null
                  ? <svg width="11" height="11"><path d="M1 5.500h9" stroke={RED} /></svg>
                  : (
                    <svg width="11" height="11" viewBox="0 0 11 11">
                      <path d={t[3] ? 'M5.500 0 11 6H8v5H3V6H0z' : 'M5.500 11 11 5H8V0H3v5H0z'} fill={t[3] ? '#ff3c3c' : '#18e818'} />
                    </svg>
                  )}
              </td>
              <td>{t[4]}</td>
            </tr>
          ))}
        </tbody>
      </Trades>
      <TabBar>
        {['细', '诊', '分', '筹', '焰', '指', '财'].map((t) => (
          <QuoteTab key={t} type="button" $active={t === tab} onClick={() => setTab(t)}>{t}</QuoteTab>
        ))}
      </TabBar>
    </Quote>
  );
};

/* ---------- footer ---------- */

const IndexBar = styled.div`
  display: grid;
  grid-template-columns: 290fr 301fr 307fr 332fr;
  height: 20px;
  padding-left: 1px;
  border-top: 1px solid ${LINE};
  background: #000;
  line-height: 19px;
  white-space: nowrap;
`;

const IndexCell = styled.div`
  display: grid;
  grid-template-columns: 16px 68fr 66fr 60fr 82fr;
  border-right: 1px solid ${LINE};
  text-align: right;
`;

const IndexName = styled.span`
  color: #f4f4b4;
  font-size: 16px;
`;

const HangSeng = styled.div`
  display: grid;
  grid-template-columns: 64px 102px 36px 95px 1fr;
  align-items: center;
  color: #fff;
  font-size: 16px;
  text-align: right;
  svg { margin: 0 5px 0 auto; }
`;

const indexes = [
  ['沪', '3052.78', '+14.65', '+0.48%', '1566亿', 'r'],
  ['深', '9988.25', '+38.33', '+0.39%', '2146亿', 'r'],
  ['创', '2082.67', '-15.89', '-0.76%', '641.5亿', 'g'],
];

const NewsBar = styled.div`
  display: flex;
  height: 20px;
  border-top: 1px solid ${LINE};
  background: #000;
  color: ${GREY};
  line-height: 19px;
  white-space: nowrap;
`;

const NewsLink = styled.a`
  padding: 0 4px 0 3px;
  border-right: 1px solid ${LINE};
`;

const Ticker = styled.div`
  display: flex;
  flex: 1;
  gap: 68px;
  min-width: 0;
  overflow: hidden;
  color: #f8f820;
  font-size: 13px;
  font-weight: bold;
`;

const Search = styled.input`
  width: 162px;
  padding-left: 5px;
  background: #c8c0c0;
  color: #222;
  font-size: 13px;
  &::placeholder { color: #333; opacity: 1; }
`;

const Clock = styled.time`
  width: 87px;
  color: #f4f4b4;
  font-size: 14px;
  font-weight: bold;
  text-align: center;
`;

const Footer = () => (
  <footer>
    <IndexBar>
      {indexes.map((r) => (
        <IndexCell key={r[0]}>
          <IndexName>{r[0]}</IndexName>
          <Value text={r[1]} tone={r[5]} />
          <Value text={r[2]} tone={r[5]} />
          <Value text={r[3]} tone={r[5]} />
          <Value text={r[4]} tone="c" />
        </IndexCell>
      ))}
      <HangSeng>
        <IndexName>恒生指数</IndexName>
        <span>–</span><span>–</span><span>–</span>
        <svg width="13" height="13" viewBox="0 0 13 13"><path d="M4 0c3 0 4 2 3.500 4l5 6-2 2-5.500-5C3 8 0 7 0 4l3 2 2-2z" fill="#666" /></svg>
      </HangSeng>
    </IndexBar>
    <NewsBar>
      {['手机', '留言', '客服', '解盘', '股市日记', '股灵通', '行情', '24小时滚动'].map((t) => (
        <NewsLink key={t} href={`#${t}`}>{t}</NewsLink>
      ))}
      <Ticker>
        <span>大反弹 掘金四类潜力股</span>
        <span>20:20 六件大事影响十月A股走势</span>
        <span>19:13 六部委发文促旅游装备制造</span>
      </Ticker>
      <Search aria-label="代码搜索" placeholder="代码/名称/简拼/功能" />
      <Clock>21:13:39</Clock>
    </NewsBar>
  </footer>
);

/* ---------- overlays ---------- */

const SiteBanner = styled.div`
  position: absolute;
  top: 0;
  right: 0;
  width: 223px;
  height: 59px;
  padding: 6px 0 0 23px;
  background: #a8a8a8;
  color: #fff;
  font-size: 24px;
  font-weight: bold;
  line-height: 28px;
  white-space: nowrap;
  a {
    display: block;
    color: #f4fc10;
    font: 600 17px/20px "Open Sans", sans-serif;
  }
`;

const DownloadBanner = styled.div`
  position: absolute;
  right: 3px;
  bottom: 0;
  height: 20px;
  padding: 0 2px;
  background: rgba(240, 232, 150, 0.88);
  color: #d03010;
  line-height: 20px;
  white-space: nowrap;
  a { font: 10px "Liberation Mono", monospace; }
`;

export default function App() {
  return (
    <Page>
      <GlobalStyle />
      <Frame>
        <TopBar />
        <Body>
          <SideTabs />
          <Main>
            <PricePane />
            <VolumePane />
            <IndicatorPane />
            <TimeAxis />
            <IndicatorTabs />
          </Main>
          <QuotePanel />
        </Body>
        <Footer />
        <DownloadBanner>股票公式股票软件下载<a href="#88gs">[</a>分析家公式网<a href="#88gs">www.88gs.com]</a></DownloadBanner>
      </Frame>
      <SiteBanner>第一股票公式网<a href="#chnmoney">www.chnmoney.com</a></SiteBanner>
    </Page>
  );
}
